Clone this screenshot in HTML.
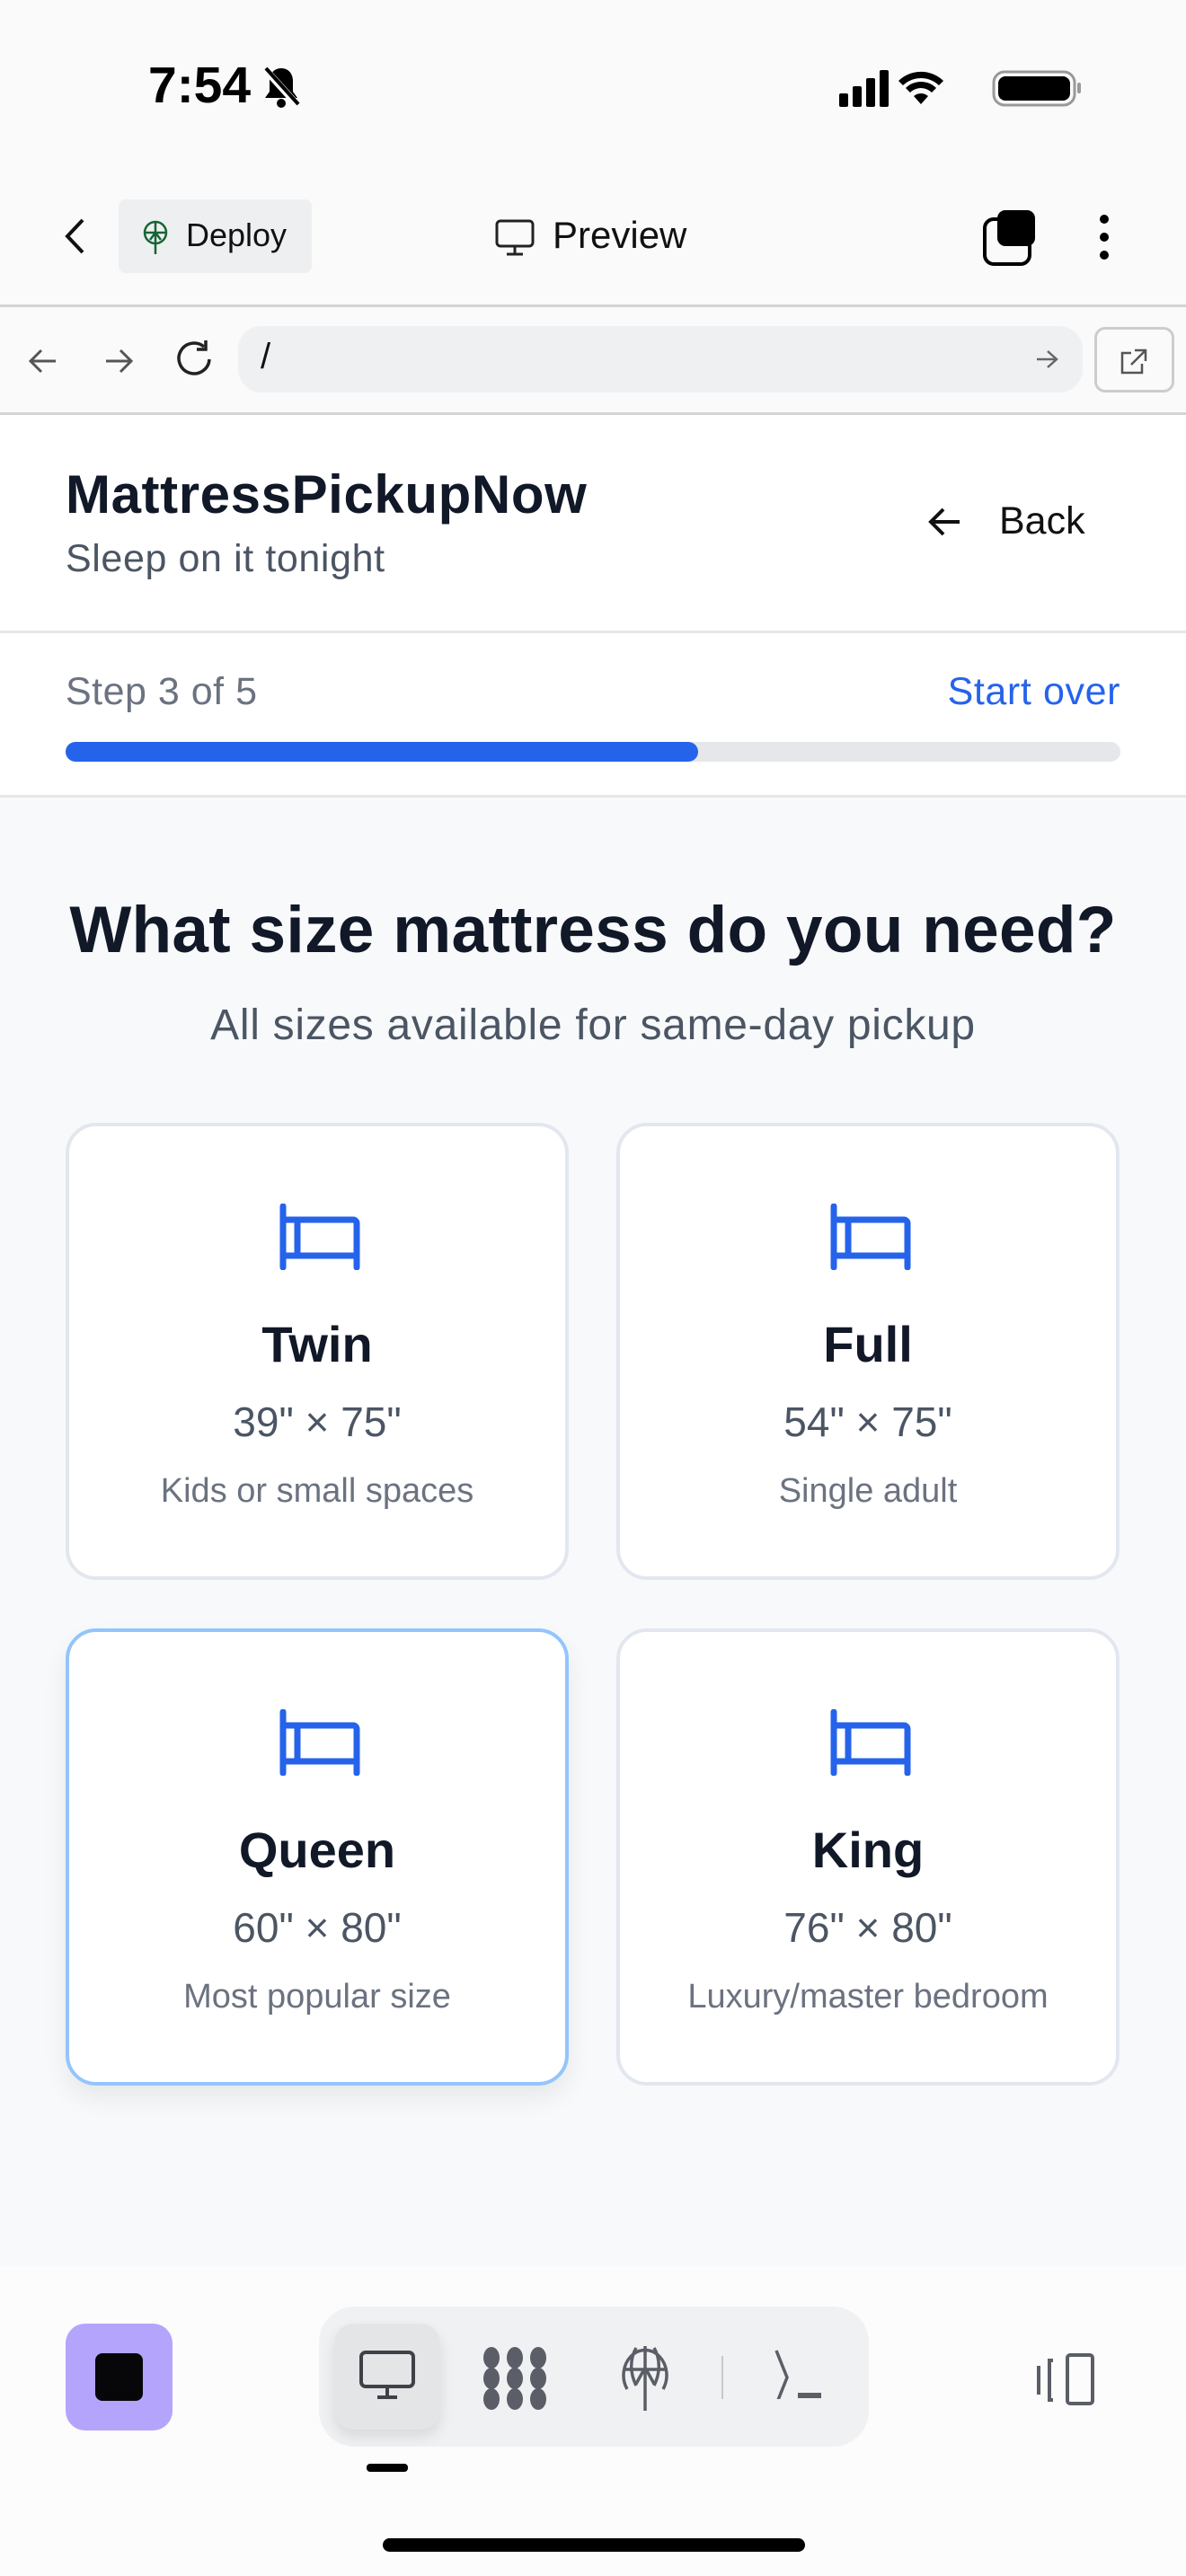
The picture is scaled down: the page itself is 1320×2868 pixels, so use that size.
<!DOCTYPE html><html><head><meta charset="utf-8"><style>
*{margin:0;padding:0;box-sizing:border-box}
body{width:1320px;height:2868px;background:#f8f9fb;font-family:"Liberation Sans",sans-serif;position:relative;overflow:hidden;color:#111827}
.a{position:absolute}
.card{position:absolute;width:560px;height:509px;background:#fff;border:4px solid #e2e7ef;border-radius:34px;text-align:center}
.card svg{position:absolute;left:234px;top:86px}
.card .t{position:absolute;left:0;right:0;top:215px;font-size:56px;line-height:56px;font-weight:bold;color:#111827}
.card .d{position:absolute;left:0;right:0;top:306px;font-size:46px;line-height:46px;color:#4b5563}
.card .s{position:absolute;left:0;right:0;top:387px;font-size:38px;line-height:38px;color:#6b7280}
</style></head><body>
<div class="a" style="left:0;top:0;width:1320px;height:887px;background:#fafafa"></div>
<div class="a" style="left:165px;top:62px;font-size:57px;font-weight:bold;color:#000">7:54</div>
<svg class="a" style="left:290px;top:72px" width="46" height="50" viewBox="0 0 46 50"><path d="M23 4c-8 0-13 6-13 14v12l-5 7h36l-5-7V18c0-8-5-14-13-14z" fill="#000"/><circle cx="23" cy="43" r="5" fill="#000"/><path d="M4 4l38 42" stroke="#fafafa" stroke-width="8"/><path d="M6 4l36 40" stroke="#000" stroke-width="4"/></svg>
<svg class="a" style="left:934px;top:76px" width="270" height="44"><rect x="0" y="28" width="10" height="15" rx="2"/><rect x="15" y="20" width="10" height="23" rx="2"/><rect x="30" y="11" width="10" height="32" rx="2"/><rect x="45" y="2" width="10" height="41" rx="2"/><path d="M91 40l-8-9a12 12 0 0 1 16 0z M74 22a24 24 0 0 1 34 0l-5 5a17 17 0 0 0-24 0z M66 14a36 36 0 0 1 50 0l-5 5a29 29 0 0 0-40 0z"/><rect x="172" y="4" width="90" height="37" rx="12" fill="none" stroke="#999" stroke-width="3"/><rect x="177" y="9" width="80" height="27" rx="8"/><rect x="265" y="16" width="4" height="12" rx="2" fill="#999"/></svg>
<svg class="a" style="left:70px;top:242px" width="30" height="42"><path d="M22 3L5 21l17 18" fill="none" stroke="#111" stroke-width="4"/></svg>
<div class="a" style="left:132px;top:222px;width:215px;height:82px;background:#eeeff1;border-radius:8px"></div>
<svg class="a" style="left:158px;top:245px" width="30" height="40" viewBox="0 0 30 40"><circle cx="15" cy="14" r="12" fill="none" stroke="#166534" stroke-width="2.5"/><path d="M3 14h24M15 2v36M9 22l6-8 6 8" fill="none" stroke="#166534" stroke-width="2.5"/></svg>
<div class="a" style="left:207px;top:241px;font-size:36px;color:#111">Deploy</div>
<svg class="a" style="left:551px;top:244px" width="44" height="42"><rect x="2" y="2" width="40" height="28" rx="4" fill="none" stroke="#222" stroke-width="3"/><path d="M22 30v8M13 39h18" stroke="#222" stroke-width="3"/></svg>
<div class="a" style="left:615px;top:238px;font-size:42px;color:#111">Preview</div>
<svg class="a" style="left:1092px;top:232px" width="64" height="64"><rect x="4" y="12" width="50" height="50" rx="10" fill="none" stroke="#000" stroke-width="4"/><rect x="18" y="2" width="42" height="40" rx="9" fill="#000"/></svg>
<svg class="a" style="left:1219px;top:236px" width="20" height="56"><circle cx="10" cy="8" r="5"/><circle cx="10" cy="28" r="5"/><circle cx="10" cy="48" r="5"/></svg>
<div class="a" style="left:0;top:339px;width:1320px;height:3px;background:#d4d4d6"></div>
<svg class="a" style="left:28px;top:382px" width="160" height="40" fill="none" stroke="#555" stroke-width="3"><path d="M34 20H6M18 8L6 20l12 12"/><path d="M90 20h28M106 8l12 12-12 12"/></svg>
<svg class="a" style="left:193px;top:376px" width="50" height="50" fill="none" stroke="#222" stroke-width="3.5"><path d="M40 24a17 17 0 1 1-6-14"/><path d="M36 3v10H26"/></svg>
<div class="a" style="left:265px;top:363px;width:940px;height:74px;background:#eff0f2;border-radius:26px"></div>
<div class="a" style="left:290px;top:375px;font-size:40px;color:#111">/</div>
<svg class="a" style="left:1152px;top:388px" width="26" height="24" fill="none" stroke="#666" stroke-width="2.5"><path d="M2 12h22M14 3l10 9-10 9"/></svg>
<div class="a" style="left:1218px;top:364px;width:89px;height:73px;border:3px solid #ccc;border-radius:12px;background:#fafafa"></div>
<svg class="a" style="left:1245px;top:387px" width="34" height="30" fill="none" stroke="#555" stroke-width="2.5"><path d="M14 6H4v22h22V18M18 3h12v12M30 3L14 19"/></svg>
<div class="a" style="left:0;top:459px;width:1320px;height:3px;background:#d4d4d6"></div>
<div class="a" style="left:0;top:462px;width:1320px;height:425px;background:#fff"></div>
<div class="a" style="left:73px;top:516px;font-size:60px;font-weight:bold;letter-spacing:0.6px;color:#111827">MattressPickupNow</div>
<div class="a" style="left:73px;top:598px;font-size:43px;letter-spacing:0.6px;color:#4b5563">Sleep on it tonight</div>
<svg class="a" style="left:1032px;top:563px" width="40" height="36" fill="none" stroke="#111" stroke-width="4"><path d="M36 18H4M18 4L4 18l14 14"/></svg>
<div class="a" style="left:1112px;top:556px;font-size:43px;color:#111">Back</div>
<div class="a" style="left:0;top:702px;width:1320px;height:3px;background:#e5e7eb"></div>
<div class="a" style="left:73px;top:746px;font-size:43px;letter-spacing:0.5px;color:#6b7280">Step 3 of 5</div>
<div class="a" style="right:73px;top:746px;font-size:43px;letter-spacing:0.6px;color:#2563eb">Start over</div>
<div class="a" style="left:73px;top:826px;width:1174px;height:22px;background:#e5e7eb;border-radius:11px"></div>
<div class="a" style="left:73px;top:826px;width:704px;height:22px;background:#2563eb;border-radius:11px"></div>
<div class="a" style="left:0;top:885px;width:1320px;height:3px;background:#e5e7eb"></div>
<div class="a" style="left:0;top:994px;width:1320px;text-align:center;font-size:73px;font-weight:bold;letter-spacing:0.3px;color:#111827">What size mattress do you need?</div>
<div class="a" style="left:0;top:1114px;width:1320px;text-align:center;font-size:48px;letter-spacing:0.7px;color:#4b5563">All sizes available for same-day pickup</div>

<div class="card" style="left:73px;top:1250px"><svg width="90" height="74" viewBox="0 0 90 74" fill="none" stroke="#2563eb" stroke-width="7" stroke-linecap="round"><path d="M4 3v68M4 18h78a4 4 0 0 1 4 4v49M4 58h82M20 20v36"/></svg><div class="t">Twin</div><div class="d">39" × 75"</div><div class="s">Kids or small spaces</div></div>
<div class="card" style="left:686px;top:1250px"><svg width="90" height="74" viewBox="0 0 90 74" fill="none" stroke="#2563eb" stroke-width="7" stroke-linecap="round"><path d="M4 3v68M4 18h78a4 4 0 0 1 4 4v49M4 58h82M20 20v36"/></svg><div class="t">Full</div><div class="d">54" × 75"</div><div class="s">Single adult</div></div>
<div class="card" style="left:73px;top:1813px;border-color:#93c5fd;box-shadow:0 14px 28px rgba(0,0,0,0.07)"><svg width="90" height="74" viewBox="0 0 90 74" fill="none" stroke="#2563eb" stroke-width="7" stroke-linecap="round"><path d="M4 3v68M4 18h78a4 4 0 0 1 4 4v49M4 58h82M20 20v36"/></svg><div class="t">Queen</div><div class="d">60" × 80"</div><div class="s">Most popular size</div></div>
<div class="card" style="left:686px;top:1813px"><svg width="90" height="74" viewBox="0 0 90 74" fill="none" stroke="#2563eb" stroke-width="7" stroke-linecap="round"><path d="M4 3v68M4 18h78a4 4 0 0 1 4 4v49M4 58h82M20 20v36"/></svg><div class="t">King</div><div class="d">76" × 80"</div><div class="s">Luxury/master bedroom</div></div>

<div class="a" style="left:0;top:2523px;width:1320px;height:345px;background:#fcfcfc"></div>
<div class="a" style="left:73px;top:2587px;width:119px;height:119px;background:#b4a4fc;border-radius:22px"></div>
<div class="a" style="left:106px;top:2620px;width:53px;height:53px;background:#070709;border-radius:8px"></div>
<div class="a" style="left:355px;top:2568px;width:612px;height:156px;background:#f0f1f3;border-radius:40px"></div>
<div class="a" style="left:372px;top:2587px;width:118px;height:118px;background:#e4e5e7;border-radius:22px;box-shadow:0 8px 16px rgba(0,0,0,0.1)"></div>
<svg class="a" style="left:398px;top:2615px" width="66" height="60" fill="none" stroke="#3f4147" stroke-width="4"><rect x="4" y="4" width="58" height="38" rx="5"/><path d="M33 42v10M22 54h22"/></svg>
<svg class="a" style="left:536px;top:2612px" width="76" height="72" fill="#5b5e66"><ellipse cx="11" cy="13" rx="9" ry="12"/><ellipse cx="37" cy="13" rx="9" ry="12"/><ellipse cx="63" cy="13" rx="9" ry="12"/><ellipse cx="11" cy="36" rx="9" ry="12"/><ellipse cx="37" cy="36" rx="9" ry="12"/><ellipse cx="63" cy="36" rx="9" ry="12"/><ellipse cx="11" cy="59" rx="9" ry="12"/><ellipse cx="37" cy="59" rx="9" ry="12"/><ellipse cx="63" cy="59" rx="9" ry="12"/></svg>
<svg class="a" style="left:690px;top:2610px" width="56" height="76" fill="none" stroke="#5b5e66" stroke-width="3.5"><path d="M8 50a24 28 0 1 1 40 0M4 28h48M28 2v72M18 4c-8 14-6 30 0 42M38 4c8 14 6 30 0 42M18 44l10-18 10 18"/></svg>
<div class="a" style="left:803px;top:2623px;width:2px;height:48px;background:#c8c9cc"></div>
<svg class="a" style="left:860px;top:2615px" width="60" height="56" fill="none" stroke="#5b5e66" stroke-width="3.5"><path d="M4 2l12 30L4 62"/><path d="M28 52h26" stroke-width="6"/></svg>
<svg class="a" style="left:1152px;top:2618px" width="70" height="60" fill="none" stroke="#5b5e66" stroke-width="4"><path d="M4 16v32M20 10h-4v44h4"/><rect x="36" y="4" width="28" height="54" rx="3"/></svg>
<div class="a" style="left:408px;top:2743px;width:46px;height:9px;background:#000;border-radius:4px"></div>
<div class="a" style="left:426px;top:2826px;width:470px;height:15px;background:#000;border-radius:8px"></div>
</body></html>
